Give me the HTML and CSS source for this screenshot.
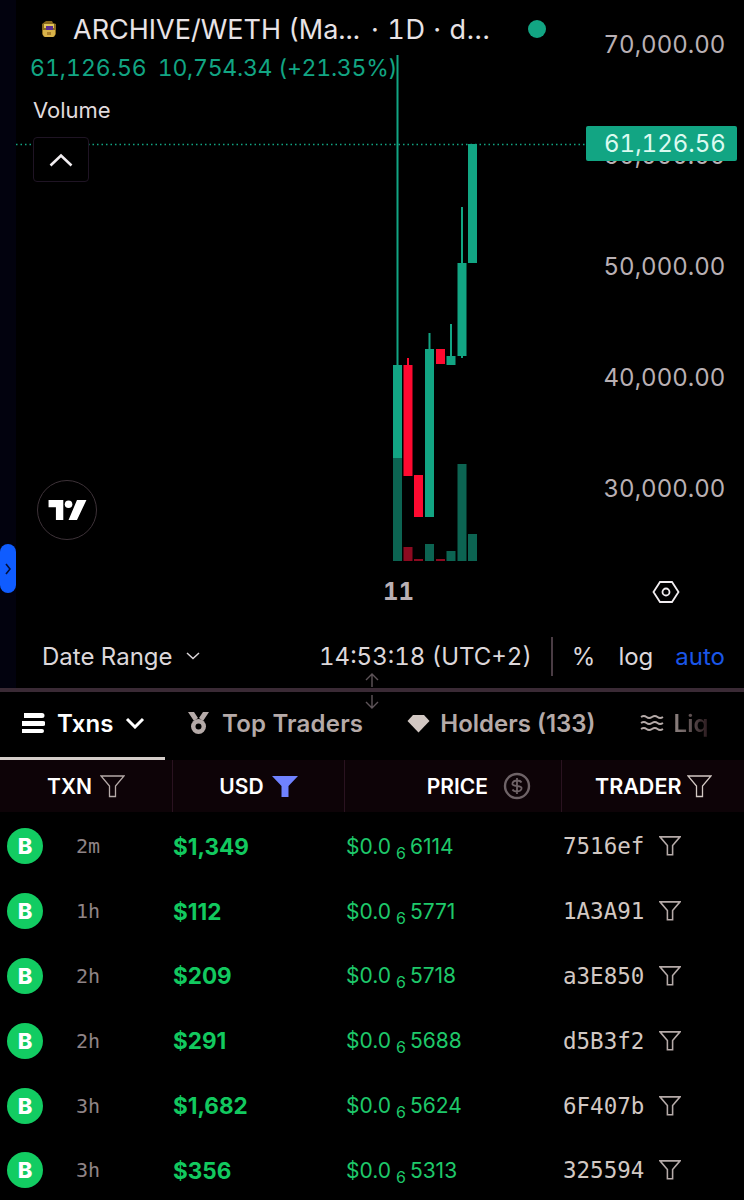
FILE: index.html
```html
<!DOCTYPE html>
<html lang="en">
<head>
    <meta charset="UTF-8">
    <meta name="viewport" content="width=device-width, initial-scale=1.0">
    <title>ARCHIVE/WETH</title>
    <link rel="stylesheet" href="styles.css">
</head>
<body>
    <div id="chart">
        <svg class="plot" width="744" height="628" viewBox="0 0 744 628">
            <line x1="16" y1="144.5" x2="586" y2="144.5" stroke="#12a583" stroke-width="1.5" stroke-dasharray="1.5 3"/>
            <g fill="#0c6452">
                <rect x="393" y="458" width="9" height="103"/>
                <rect x="425" y="544" width="9" height="17"/>
                <rect x="446.500" y="551" width="9" height="10"/>
                <rect x="457.500" y="464" width="9" height="97"/>
                <rect x="468" y="534" width="9" height="27"/>
            </g>
            <g fill="#8c0a20">
                <rect x="403.500" y="547" width="9" height="14"/>
                <rect x="414" y="559" width="9" height="2"/>
                <rect x="436" y="559" width="9" height="2"/>
            </g>
            <g fill="#12a583">
                <rect x="396.500" y="55" width="2" height="310"/>
                <rect x="393" y="365" width="9" height="93"/>
                <rect x="428.500" y="333" width="2" height="16"/>
                <rect x="425" y="349" width="9" height="168"/>
                <rect x="450" y="324" width="2" height="32"/>
                <rect x="446.500" y="356" width="9" height="9"/>
                <rect x="461" y="207" width="2" height="151"/>
                <rect x="457.500" y="263" width="9" height="93"/>
                <rect x="468" y="144" width="9" height="119"/>
            </g>
            <g fill="#ff0a30">
                <rect x="407" y="358" width="2" height="7"/>
                <rect x="403.500" y="365" width="9" height="111"/>
                <rect x="414" y="475" width="9" height="42"/>
                <rect x="436" y="349" width="9" height="15"/>
            </g>
        </svg>

        <div class="side-strip"></div>
        <div class="side-tab">
            <svg width="6" height="12" viewBox="0 0 6 12"><path d="M1 1l4 5-4 5" fill="none" stroke="#04103a" stroke-width="1.600"/></svg>
        </div>

        <div class="legend">
            <div class="title-row">
                <svg class="chest" width="18" height="18" viewBox="0 0 18 18">
                    <path d="M2 4l4-3h6l1 2 3 1v10l-2 3H4l-2-3z" fill="#8a6a1e"/>
                    <path d="M4 4h10v4H4z" fill="#e2c65a"/>
                    <path d="M6 6h7v4H6z" fill="#5a2d8c"/>
                    <path d="M3 10h12v5l-2 2H5l-2-2z" fill="#d8b24a"/>
                    <path d="M7 12h4v3H7z" fill="#a87d2a"/>
                </svg>
                <span class="title">ARCHIVE/WETH (Ma...</span>
                <span class="title-meta">· 1D · d...</span>
                <span class="status-dot"></span>
            </div>
            <div class="values">
                <span>61,126.56</span>
                <span class="change">10,754.34 (+21.35%)</span>
            </div>
            <div class="volume">Volume</div>
            <div class="collapse">
                <svg width="24" height="14" viewBox="0 0 24 14"><path d="M1.500 12.500L12 2.500l10.500 10" fill="none" stroke="#f1edf0" stroke-width="2.600"/></svg>
            </div>
        </div>

        <div class="price-axis">
            <span>70,000.00</span>
            <span>60,000.00</span>
            <span>50,000.00</span>
            <span>40,000.00</span>
            <span>30,000.00</span>
        </div>
        <div class="last-price">61,126.56</div>

        <div class="tv-logo">
            <svg width="39" height="20" viewBox="0 0 36 19"><path d="M14 19H7V7H0V0h14zM27 19h-8L27 0h9z" fill="#fff"/><circle cx="19" cy="4" r="3.600" fill="#fff"/></svg>
        </div>

        <div class="time-axis">
            <span class="tick">11</span>
            <svg class="gear" width="28" height="24" viewBox="0 0 28 24">
                <path d="M8 2h12l6.500 10L20 22H8L1.500 12z" fill="none" stroke="#f1edf0" stroke-width="1.800"/>
                <circle cx="14" cy="12" r="3.500" fill="none" stroke="#f1edf0" stroke-width="1.800"/>
            </svg>
        </div>
    </div>

    <div class="toolbar">
        <div class="range">Date Range
            <svg width="14" height="8" viewBox="0 0 14 8"><path d="M1 1l6 5.500L13 1" fill="none" stroke="#dcd7da" stroke-width="1.500"/></svg>
        </div>
        <div class="tools">
            <span class="clock">14:53:18 (UTC+2)</span>
            <span class="sep"></span>
            <span class="pct">%</span>
            <span class="log">log</span>
            <span class="auto">auto</span>
        </div>
    </div>

    <div class="splitter">
        <svg class="resize" width="16" height="38" viewBox="0 0 16 38">
            <path d="M8 15V2M2 8l6-6 6 6M8 23v13M2 30l6 6 6-6" fill="none" stroke="#5e5459" stroke-width="1.400"/>
        </svg>
    </div>

    <div class="tabs">
        <div class="tab active">
            <svg width="24" height="22" viewBox="0 0 24 22"><path d="M3 1h18a2 2 0 0 1 0 5H3zM1 9h21a2.500 2.500 0 0 1 0 5H1zM1 17h20a2 2 0 0 1 0 4H1z" fill="#fff"/></svg>
            <span>Txns</span>
            <svg class="tab-caret" width="20" height="12" viewBox="0 0 20 12"><path d="M2 2l8 8 8-8" fill="none" stroke="#fff" stroke-width="3"/></svg>
        </div>
        <div class="tab near">
            <svg width="23" height="24" viewBox="0 0 23 24">
                <path d="M1 1h6l4 6-4 3zM22 1h-6l-4 6 4 3z" fill="#b5aaa8"/>
                <circle cx="11.500" cy="15.500" r="7.500" fill="#b5aaa8"/>
                <circle cx="11.500" cy="15.500" r="3" fill="#000"/>
            </svg>
            <span>Top Traders</span>
        </div>
        <div class="tab">
            <svg width="23" height="19" viewBox="0 0 23 19"><path d="M6 1h11l5.500 6-11 11.500L.5 7z" fill="#d2c8c3"/></svg>
            <span>Holders (133)</span>
        </div>
        <div class="tab">
            <svg width="24" height="18" viewBox="0 0 24 18"><path d="M1 3q3-2 5.500 0t5.500 0 5.500 0 5.500 0M1 9q3-2 5.500 0t5.500 0 5.500 0 5.500 0M1 15q3-2 5.500 0t5.500 0 5.500 0 5.500 0" fill="none" stroke="#b5aaa8" stroke-width="1.800"/></svg>
            <span class="fade">Liq</span>
        </div>
    </div>

    <div class="head grid">
        <div class="cell center">TXN
            <svg class="funnel" width="25" height="23" viewBox="0 0 25 23"><path d="M1 1h23l-8.500 10v10.500h-6V11z" fill="none" stroke="#b5aaa8" stroke-width="1.300"/></svg>
        </div>
        <div class="cell center">USD
            <svg width="26" height="23" viewBox="0 0 26 23"><path d="M0 1h26l-9.500 10v11h-7V11z" fill="#6f82ff"/></svg>
        </div>
        <div class="cell end">PRICE
            <svg width="28" height="28" viewBox="0 0 28 28">
                <circle cx="14" cy="14" r="12" fill="none" stroke="#6e6367" stroke-width="2.400"/>
                <path d="M18.500 10.500q-1-2-4.500-2t-4.500 2.500 4.500 3 4.500 3-4.500 2.500-4.500-2M14 6v16" fill="none" stroke="#6e6367" stroke-width="1.800"/>
            </svg>
        </div>
        <div class="cell start">TRADER
            <svg class="funnel" width="25" height="23" viewBox="0 0 25 23"><path d="M1 1h23l-8.500 10v10.500h-6V11z" fill="none" stroke="#d2c8c3" stroke-width="1.300"/></svg>
        </div>
    </div>

    <div id="rows"></div>

    <script>
        var txns = [
            ['2m', '$1,349', '6114', '7516ef'],
            ['1h', '$112', '5771', '1A3A91'],
            ['2h', '$209', '5718', 'a3E850'],
            ['2h', '$291', '5688', 'd5B3f2'],
            ['3h', '$1,682', '5624', '6F407b'],
            ['3h', '$356', '5313', '325594']
        ];
        var funnel = '<svg width="22" height="20" viewBox="0 0 25 23"><path d="M1 1h23l-8.500 10v10.500h-6V11z" fill="none" stroke="#b5aaa8" stroke-width="1.800"/></svg>';
        var html = '';
        for (var i = 0; i < txns.length; i++) {
            var t = txns[i];
            html += '<div class="row grid">' +
                '<div class="first"><span class="badge">B</span><span class="age">' + t[0] + '</span></div>' +
                '<div class="usd">' + t[1] + '</div>' +
                '<div class="price">$0.0<sub>6</sub>' + t[2] + '</div>' +
                '<div class="trader"><span>' + t[3] + '</span>' + funnel + '</div>' +
                '</div>';
        }
        document.getElementById('rows').innerHTML = html;
    </script>
</body>
</html>
```

FILE: styles.css
```css
body {
    margin: 0;
    width: 744px;
    height: 1200px;
    overflow: hidden;
    background-color: #000;
    font-family: Inter, "Liberation Sans", sans-serif;
    color: #dcd7da;
}
#chart {
    position: relative;
    height: 628px;
    font-variant-numeric: tabular-nums;
}
.plot {
    position: absolute;
    left: 0;
    top: 0;
}
.side-strip {
    position: absolute;
    left: 0;
    top: 0;
    width: 16px;
    height: 688px;
    background-color: #02020e;
}
.side-tab {
    position: absolute;
    left: 0;
    top: 544px;
    width: 16px;
    height: 49px;
    background-color: #0f5cff;
    border-radius: 8px;
    display: flex;
    align-items: center;
    justify-content: center;
}
.legend {
    position: absolute;
    left: 31px;
    top: 14px;
}
.title-row {
    display: flex;
    align-items: center;
    height: 30px;
    white-space: nowrap;
}
.chest {
    margin-left: 9px;
}
.title {
    margin-left: 15px;
    font-size: 27px;
    color: #e8e3e6;
}
.title-meta {
    margin-left: 11px;
    font-size: 27px;
    letter-spacing: 0.6px;
    color: #e8e3e6;
}
.status-dot {
    position: absolute;
    left: 497px;
    top: 6px;
    width: 18px;
    height: 18px;
    border-radius: 50%;
    background-color: #12a583;
}
.values {
    margin-top: 9px;
    margin-left: -1px;
    display: flex;
    gap: 11px;
    font-size: 23px;
    line-height: 30px;
    color: #12a583;
    white-space: nowrap;
}
.change {
    letter-spacing: -0.25px;
}
.volume {
    margin-top: 12px;
    margin-left: 2px;
    font-size: 22px;
    line-height: 30px;
    color: #e0dbde;
}
.collapse {
    margin-left: 2px;
    margin-top: 12px;
    width: 54px;
    height: 43px;
    background-color: #000;
    border: 1px solid #1f1424;
    border-radius: 4px;
    display: flex;
    align-items: center;
    justify-content: center;
}
.price-axis {
    position: absolute;
    left: 603.500px;
    top: 0;
    display: flex;
    flex-direction: column;
    margin-top: -11px;
    font-size: 24px;
    color: #b9b0b4;
}
.price-axis span {
    height: 111px;
    line-height: 111px;
}
.last-price {
    position: absolute;
    left: 586px;
    top: 126px;
    width: 151px;
    height: 35px;
    box-sizing: border-box;
    padding-left: 18px;
    line-height: 35px;
    background-color: #12a583;
    border-radius: 2px;
    font-size: 24px;
    color: #dcfaf0;
}
.tv-logo {
    position: absolute;
    left: 37px;
    top: 480px;
    width: 58px;
    height: 58px;
    border: 1.500px solid #3d3238;
    border-radius: 50%;
    display: flex;
    align-items: center;
    justify-content: center;
}
.time-axis {
    position: absolute;
    left: 0;
    right: 0;
    top: 576px;
    height: 32px;
}
.tick {
    position: absolute;
    left: 383px;
    font-size: 24px;
    line-height: 32px;
    font-weight: 700;
    color: #b9b0b4;
}
.gear {
    position: absolute;
    left: 652px;
    top: 4px;
}
.toolbar {
    height: 56px;
    padding: 0 19px 4px 42px;
    display: flex;
    align-items: center;
    justify-content: space-between;
    font-size: 24px;
    font-variant-numeric: tabular-nums;
    color: #dcd7da;
    white-space: nowrap;
}
.range {
    display: flex;
    align-items: center;
    gap: 13px;
}
.tools {
    display: flex;
    align-items: center;
}
.sep {
    width: 2px;
    height: 39px;
    margin: 0 19px;
    background-color: #4a3c44;
}
.log {
    margin-left: 23px;
}
.auto {
    margin-left: 22px;
    color: #1a56e8;
}
.splitter {
    position: relative;
    height: 4px;
    background-color: #3a2a35;
}
.resize {
    position: absolute;
    left: 364px;
    top: -16px;
}
.tabs {
    height: 68px;
    display: flex;
    overflow: hidden;
    white-space: nowrap;
    font-size: 24px;
    font-weight: 600;
    color: #b5aaa8;
}
.tab {
    height: 100%;
    box-sizing: border-box;
    display: flex;
    align-items: center;
    gap: 10px;
    padding: 0 0 6px 44px;
}
.tab.near {
    padding-left: 22px;
    gap: 12px;
    letter-spacing: 0.2px;
}
.tab.active {
    width: 165px;
    padding-left: 21px;
    padding-bottom: 3px;
    gap: 12px;
    border-bottom: 3px solid #d4cdc9;
    color: #fff;
}
.fade {
    background: linear-gradient(90deg, #8f8482, #2a1a1e);
    -webkit-background-clip: text;
    background-clip: text;
    color: transparent;
}
.grid {
    display: grid;
    grid-template-columns: 173px 172px 217px 182px;
}
.head {
    height: 52px;
    background-color: #0d0307;
    font-size: 21px;
    font-weight: 600;
    color: #fff;
}
.cell {
    display: flex;
    align-items: center;
    gap: 8px;
    border-right: 1px solid #2a1320;
}
.cell.center {
    justify-content: center;
}
.cell.end {
    justify-content: flex-end;
    padding-right: 30px;
    gap: 15px;
}
.cell.start {
    padding-left: 33px;
    border-right: none;
    gap: 6px;
    font-size: 21.500px;
}
#rows {
    padding-top: 2px;
}
.row {
    height: 64.800px;
    align-items: center;
    white-space: nowrap;
}
.first {
    display: flex;
    align-items: center;
    padding-left: 7px;
}
.badge {
    width: 36px;
    height: 36px;
    border-radius: 50%;
    background-color: #12cc62;
    color: #fff;
    font-size: 22px;
    font-weight: 800;
    line-height: 36px;
    text-align: center;
}
.age {
    margin-left: 33px;
    font-family: "DejaVu Sans Mono", monospace;
    font-size: 20px;
    color: #8f8486;
}
.usd {
    font-size: 22.500px;
    font-weight: 700;
    color: #12c95f;
}
.price {
    font-size: 21px;
    padding-left: 1px;
    color: #1ec86a;
}
.price sub {
    font-size: 16px;
    line-height: 0;
    margin: 0 4px 0 5px;
    vertical-align: -5px;
}
.trader {
    display: flex;
    align-items: center;
    padding-left: 1px;
    gap: 15px;
    font-family: "DejaVu Sans Mono", monospace;
    font-size: 22.500px;
    color: #d2c8c3;
}
```
